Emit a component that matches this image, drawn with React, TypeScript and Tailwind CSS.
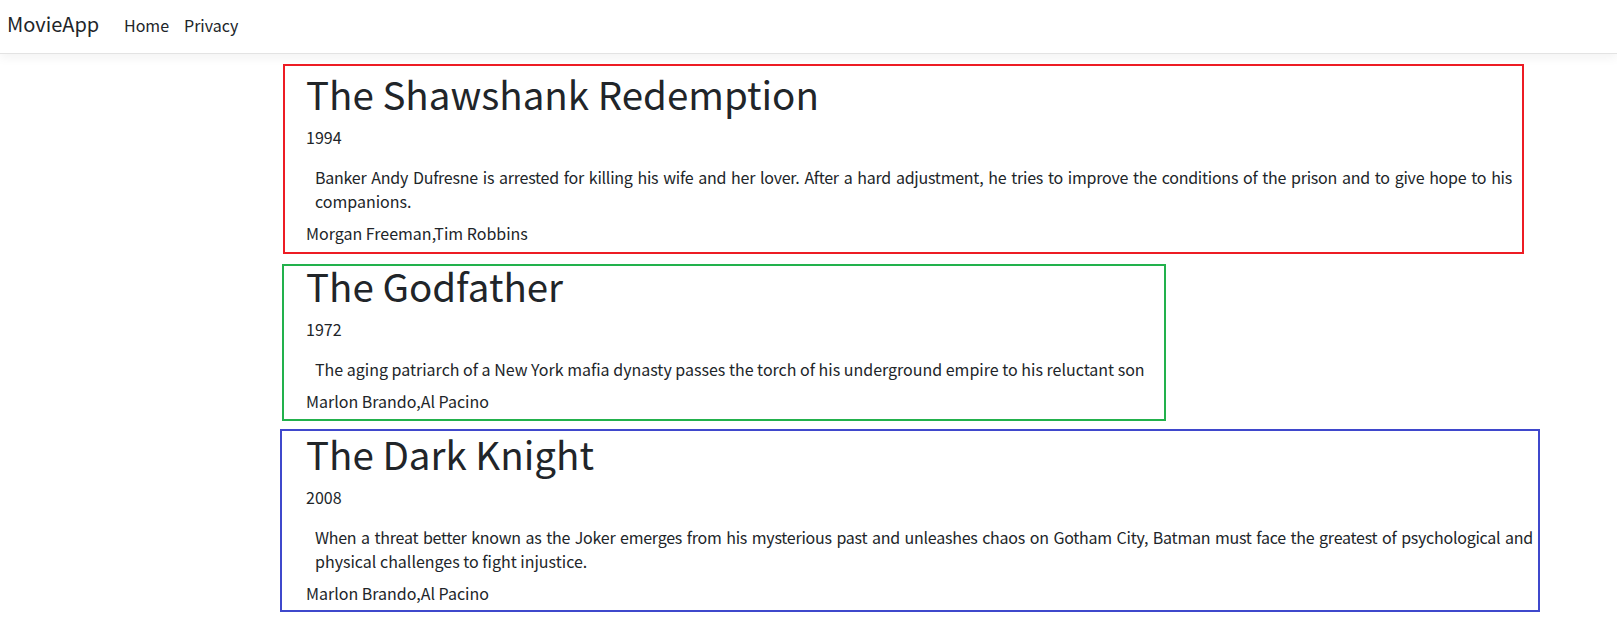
type Movie = {
  title: string;
  year: string;
  lines: string[];
  cast: string;
};

const movies: Movie[] = [
  {
    title: "The Shawshank Redemption",
    year: "1994",
    lines: [
      "Banker Andy Dufresne is arrested for killing his wife and her lover. After a hard adjustment, he tries to improve the conditions of the prison and to give hope to his",
      "companions.",
    ],
    cast: "Morgan Freeman,Tim Robbins",
  },
  {
    title: "The Godfather",
    year: "1972",
    lines: [
      "The aging patriarch of a New York mafia dynasty passes the torch of his underground empire to his reluctant son",
    ],
    cast: "Marlon Brando,Al Pacino",
  },
  {
    title: "The Dark Knight",
    year: "2008",
    lines: [
      "When a threat better known as the Joker emerges from his mysterious past and unleashes chaos on Gotham City, Batman must face the greatest of psychological and",
      "physical challenges to fight injustice.",
    ],
    cast: "Marlon Brando,Al Pacino",
  },
];

// outline boxes drawn around each movie, one per entry
const frames = [
  "mt-[10px] ml-[283px] w-[1241px] pl-[21px] pt-[3px] pb-[7px] border-[#ed1c24]",
  "mt-[10px] ml-[282px] w-[884px] pl-[22px] pb-[6px] border-[#22b14c]",
  "mt-[8px] ml-[280px] w-[1260px] pl-[24px] pb-[5px] border-[#3f48cc]",
];

const titleOffset = ["mt-0", "-mt-[5px]", "-mt-[2px]"];
const descWidth = ["w-[1206px]", "w-fit", "w-[1227px]"];

function MovieCard({ movie, index }: { movie: Movie; index: number }) {
  return (
    <div className={`border-2 ${frames[index]}`}>
      <h1 className={`text-[38.5px] leading-[48px] mb-2 ${titleOffset[index]}`}>{movie.title}</h1>
      <p className="mb-4">{movie.year}</p>
      <div className={`pl-[9px] mb-2 ${descWidth[index]}`}>
        {movie.lines.map((line, i) =>
          i < movie.lines.length - 1 ? (
            <div key={i} className="tracking-[-0.25px] text-justify [text-align-last:justify]">
              {line}
            </div>
          ) : (
            <div key={i} className="whitespace-nowrap">
              {line}
            </div>
          )
        )}
      </div>
      <p>{movie.cast}</p>
    </div>
  );
}

export default function App() {
  return (
    <div
      className="min-h-screen bg-white text-[#212529] text-base leading-6"
      style={{ fontFamily: "'Noto Sans CJK KR', 'Noto Sans', sans-serif" }}
    >
      {/* Navbar */}
      <nav className="h-[54px] border-b border-[#e3e3e3] bg-white shadow-[0_4px_10px_rgba(0,0,0,0.05)] pt-[9px] pl-[7px]">
        <div className="flex items-baseline">
          <a className="w-[117px] text-[20px] leading-[30px]">MovieApp</a>
          <a className="w-[60px]">Home</a>
          <a>Privacy</a>
        </div>
      </nav>

      <main>
        {movies.map((movie, i) => (
          <MovieCard key={movie.title} movie={movie} index={i} />
        ))}
      </main>
    </div>
  );
}
